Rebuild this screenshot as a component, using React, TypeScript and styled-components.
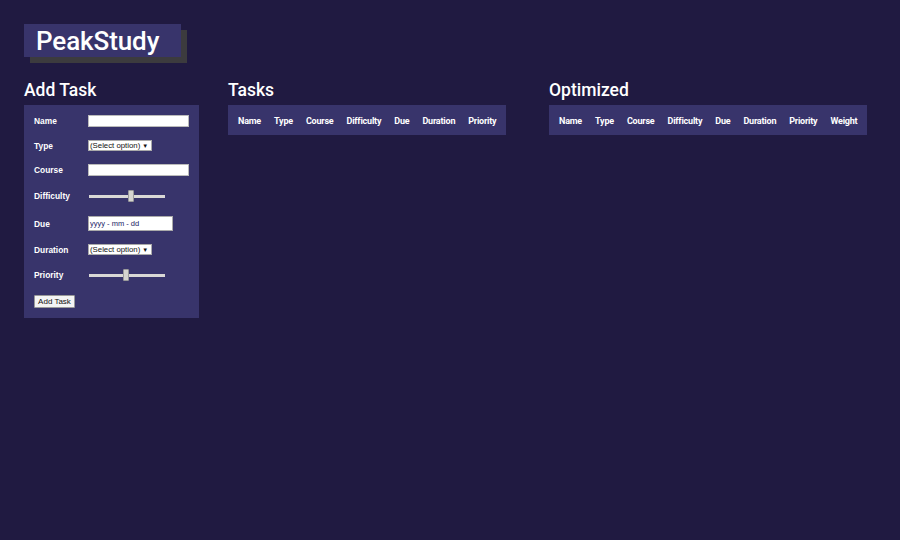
import React from "react";
import styled, { createGlobalStyle } from "styled-components";

const Global = createGlobalStyle`
  html, body { margin: 0; padding: 0; background: #201a41; }
  body { font-family: Roboto, "Liberation Sans", sans-serif; color: #fff; }
`;

const Page = styled.div`
  min-height: 540px;
  padding: 24px;
  box-sizing: border-box;
  background: #201a41;
`;

const Logo = styled.div`
  display: inline-block;
  background: #38346b;
  box-shadow: 6px 6px 0 #3c3b3e;
  padding: 0 22px 0 12px;
  height: 33px;
  line-height: 34px;
  font-size: 26px;
  font-weight: 500;
  color: #fff;
  letter-spacing: -0.1px;
`;

const Columns = styled.div`
  display: flex;
  align-items: flex-start;
  margin-top: 25px;
`;

const Section = styled.div<{ $w: number }>`
  width: ${(p) => p.$w}px;
  flex: none;
`;

const Heading = styled.h2`
  margin: 0 0 6px 0;
  height: 17px;
  line-height: 17px;
  font-size: 17.5px;
  font-weight: 500;
  color: #fff;
`;

const Panel = styled.div`
  background: #38346b;
  padding: 10px;
  display: inline-block;
  box-sizing: border-box;
`;

const FormPanel = styled(Panel)`
  width: 175px;
`;

const FormGrid = styled.div`
  display: grid;
  grid-template-columns: 54px auto;
  row-gap: 13px;
  align-items: center;
`;

const Label = styled.div`
  font-family: "Liberation Sans", Arial, sans-serif;
  font-size: 8.4px;
  font-weight: 700;
  color: #fff;
  line-height: 10px;
`;

const TextInput = styled.input`
  width: 101px;
  height: 12px;
  box-sizing: border-box;
  border: 1px solid #bbb;
  background: #fff;
  padding: 0;
  margin: 0;
  display: block;
`;

const SelectBox = styled.div`
  display: inline-flex;
  align-items: center;
  width: 64px;
  height: 11px;
  box-sizing: border-box;
  border: 1px solid #aaa;
  background: #fff;
  font-family: "Liberation Sans", Arial, sans-serif;
  font-size: 7.8px;
  color: #111;
  padding: 0 1px;
  gap: 2px;
  white-space: nowrap;
`;

const Arrow = styled.span`
  font-size: 6px;
  color: #111;
`;

const DateBox = styled.div`
  width: 85px;
  height: 15px;
  box-sizing: border-box;
  border: 1px solid #aaa;
  background: #fff;
  font-family: "Liberation Sans", Arial, sans-serif;
  font-size: 7.5px;
  color: #1b1b66;
  line-height: 13px;
  padding-left: 1px;
  white-space: pre;
`;

const Range = styled.input`
  -webkit-appearance: none;
  appearance: none;
  width: 76px;
  height: 14px;
  margin: 0 0 0 1px;
  background: transparent;
  display: block;
  &::-webkit-slider-runnable-track {
    height: 3px;
    background: #d9d8d6;
    border: none;
  }
  &::-webkit-slider-thumb {
    -webkit-appearance: none;
    width: 6px;
    height: 12px;
    margin-top: -4.5px;
    background: #d5d4d0;
    border: 1px solid #9a9a9a;
    border-radius: 1px;
    box-sizing: border-box;
  }
`;

const Button = styled.button`
  grid-column: 1 / span 2;
  justify-self: start;
  height: 13px;
  width: 41px;
  padding: 0;
  margin: 0;
  border: 1px solid #999;
  background: #f4f4f4;
  font-family: "Liberation Sans", Arial, sans-serif;
  font-size: 8px;
  color: #111;
  line-height: 11px;
  border-radius: 1px;
`;

const TableBar = styled.div`
  background: #38346b;
  display: inline-flex;
  height: 30px;
  align-items: center;
  padding: 1px 10px 0;
  gap: 13px;
  box-sizing: border-box;
`;

const Th = styled.div`
  font-size: 9px;
  font-weight: 700;
  color: #fff;
  letter-spacing: -0.2px;
`;

const taskCols = ["Name", "Type", "Course", "Difficulty", "Due", "Duration", "Priority"];
const optCols = [...taskCols, "Weight"];

export default function App() {
  return (
    <>
      <Global />
      <Page>
        <Logo>PeakStudy</Logo>
        <Columns>
          <Section $w={204}>
            <Heading>Add Task</Heading>
            <FormPanel>
              <FormGrid>
                <Label>Name</Label>
                <TextInput type="text" />
                <Label>Type</Label>
                <SelectBox>
                  (Select option)<Arrow>▼</Arrow>
                </SelectBox>
                <Label>Course</Label>
                <TextInput type="text" />
                <Label>Difficulty</Label>
                <Range type="range" min={0} max={100} defaultValue={56} />
                <Label>Due</Label>
                <DateBox>{"yyyy - mm - dd"}</DateBox>
                <Label>Duration</Label>
                <SelectBox>
                  (Select option)<Arrow>▼</Arrow>
                </SelectBox>
                <Label>Priority</Label>
                <Range type="range" min={0} max={100} defaultValue={49} />
                <Button>Add Task</Button>
              </FormGrid>
            </FormPanel>
          </Section>
          <Section $w={321}>
            <Heading>Tasks</Heading>
            <TableBar>
              {taskCols.map((c) => (
                <Th key={c}>{c}</Th>
              ))}
            </TableBar>
          </Section>
          <Section $w={330}>
            <Heading>Optimized</Heading>
            <TableBar>
              {optCols.map((c) => (
                <Th key={c}>{c}</Th>
              ))}
            </TableBar>
          </Section>
        </Columns>
      </Page>
    </>
  );
}
